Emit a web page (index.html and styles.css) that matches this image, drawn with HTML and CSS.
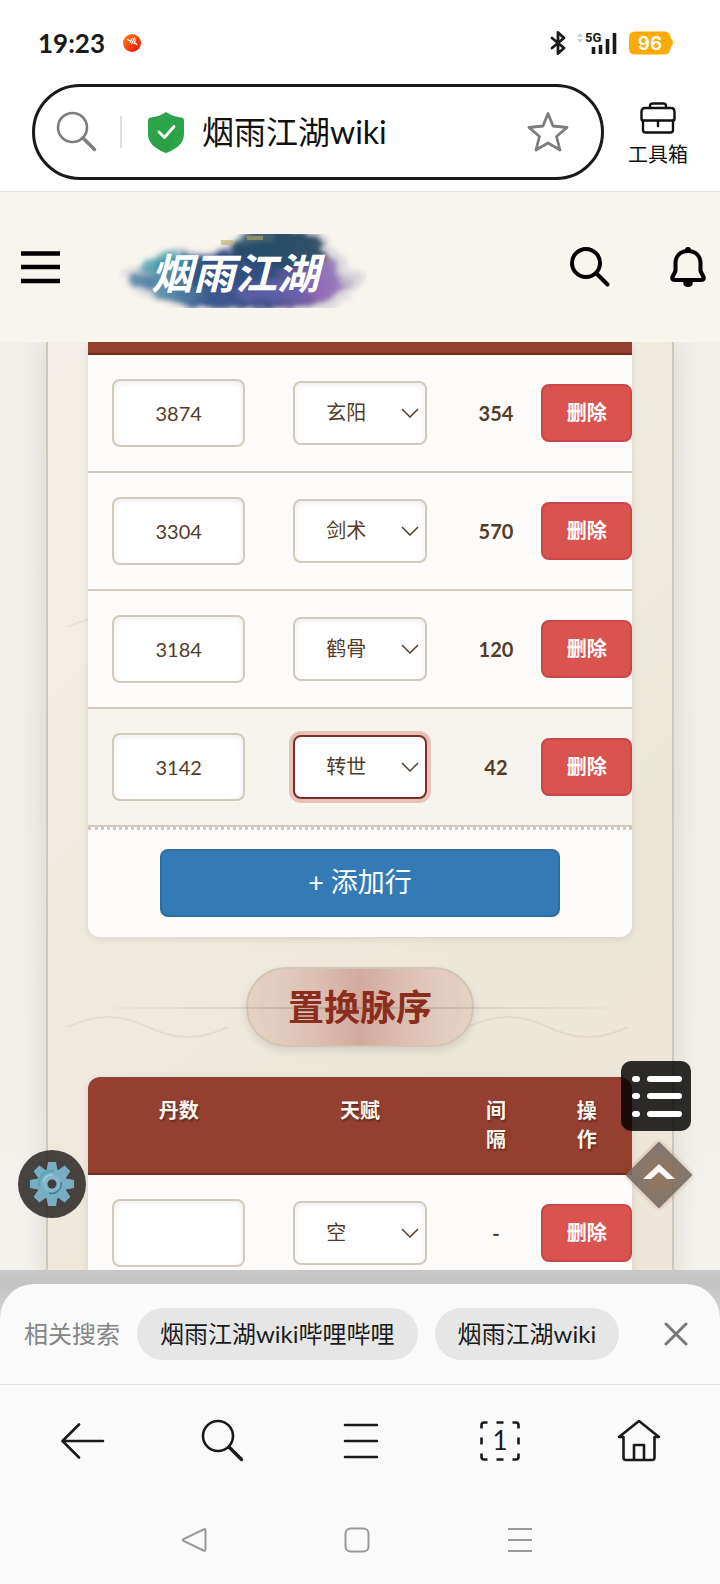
FILE: index.html
```html
<!DOCTYPE html>
<html lang="zh-CN">
<head>
	<meta charset="UTF-8">
	<meta name="viewport" content="width=device-width, initial-scale=1.0">
	<title>烟雨江湖wiki</title>
	<link rel="stylesheet" href="styles.css">
</head>
<body>
	<!-- Status bar -->
	<div class="status-bar">
		<span class="clock">19:23</span>
		<svg class="app-dot" width="18" height="18" viewBox="0 0 18 18">
			<defs>
				<linearGradient id="dot" x1="0" y1="0" x2="1" y2="1">
					<stop offset="0" stop-color="#ff8a1c"/>
					<stop offset=".55" stop-color="#fb3d0a"/>
					<stop offset="1" stop-color="#e01208"/>
				</linearGradient>
			</defs>
			<circle cx="9" cy="9" r="9" fill="url(#dot)"/>
			<path d="M4.500 5.500l2 1M7 8.500l2-4M8.500 10l3-6M11 9.500l1.500-3.500M12.500 9.500l1.500 1" stroke="#fff" stroke-width="1.300" stroke-linecap="round" fill="none"/>
		</svg>
		<div class="status-icons">
			<svg width="16" height="26" viewBox="0 0 16 26" fill="none" stroke="#1a1a1a" stroke-width="2.800" stroke-linejoin="round" stroke-linecap="round">
				<path d="M2 8l12 10-6 5.500v-21L14 8 2 18"/>
			</svg>
			<svg width="42" height="26" viewBox="0 0 42 26">
				<path d="M1 7l3-4 3 4zM1 9l3 4 3-4z" fill="#ccc"/>
				<text class="net-label" x="9" y="12">5G</text>
				<path d="M17.500 17v7M24.500 15v9M31.500 9v15M38.500 3v21" stroke="#1a1a1a" stroke-width="3.600"/>
			</svg>
			<svg width="45" height="24" viewBox="0 0 45 24">
				<path d="M7 .500h30q5 0 6 7 2 1 2 4t-2 4q-1 8-6 8H7q-6 0-6-6v-11q0-6 6-6z" fill="#fcab05"/>
				<text class="battery-label" x="22" y="19" text-anchor="middle">96</text>
			</svg>
		</div>
	</div>

	<!-- Address bar -->
	<div class="address-bar">
		<form class="address-box">
			<svg class="addr-search" width="42" height="42" viewBox="0 0 42 42" fill="none" stroke="#7d7d7d" stroke-linecap="round">
				<circle cx="16.500" cy="16.500" r="14.500" stroke-width="2.600"/>
				<path d="M27 27l11.500 11.500" stroke-width="3.400"/>
			</svg>
			<span class="addr-divider"></span>
			<svg class="addr-shield" width="36" height="41" viewBox="0 0 36 41">
				<path d="M18 0c4 3 10 5 15 5.500 2 .2 3 1.200 3 3V22c0 9-7 15-18 19C7 37 0 31 0 22V8.500c0-1.800 1-2.800 3-3C8 5 14 3 18 0z" fill="#2da44a"/>
				<path d="M4 27l9-7 5 5 8-10v18l-8 8C12 39 7 35 4 27z" fill="#24933f" opacity=".25"/>
				<path d="M11 20l5.500 5.500L26 14.500" fill="none" stroke="#fff" stroke-width="2.800" stroke-linecap="round" stroke-linejoin="round"/>
			</svg>
			<input class="addr-input" type="text" aria-label="地址" value="烟雨江湖wiki">
			<button class="icon-btn" type="button" aria-label="收藏">
				<svg width="42" height="40" viewBox="0 0 42 40" fill="none" stroke="#7d7d7d" stroke-width="2.800" stroke-linejoin="round">
					<path d="M21 1.500l5 12.500 14 1.500-10.500 9 3.500 13.500-12-7-12 7 3.500-13.500L2 15.500 16 14z"/>
				</svg>
			</button>
		</form>
		<button class="toolbox" type="button">
			<svg width="36" height="32" viewBox="0 0 36 32" fill="none" stroke="#111" stroke-width="2.400" stroke-linejoin="round" stroke-linecap="round">
				<path d="M10 6V4q0-2.500 2.500-2.500h11Q26 1.500 26 4v2"/>
				<path d="M3 18.500q-1.500 0-1.500-1.500v-7Q1.500 6 5 6h26q3.500 0 3.500 4v7q0 1.500-1.500 1.500z"/>
				<path d="M3 18.500V28q0 2.500 2.500 2.500h25Q33 30.500 33 28v-9.500M18 19v5"/>
			</svg>
			<span>工具箱</span>
		</button>
	</div>

	<!-- Site header -->
	<header class="site-header">
		<button class="icon-btn" type="button" aria-label="菜单">
			<svg width="39" height="34" viewBox="0 0 39 34" stroke="#000" stroke-width="4.600">
				<path d="M0 3.500h39M0 17h39M0 31h39"/>
			</svg>
		</button>
		<a class="site-logo" href="#" aria-label="烟雨江湖">
			<svg width="250" height="74" viewBox="0 0 250 74">
				<defs>
					<filter id="ink" x="-10%" y="-20%" width="120%" height="140%">
						<feTurbulence type="fractalNoise" baseFrequency=".05 .09" numOctaves="4" seed="3" result="n"/>
						<feDisplacementMap in="SourceGraphic" in2="n" scale="18" xChannelSelector="R" yChannelSelector="G"/>
						<feGaussianBlur stdDeviation="2.500"/>
					</filter>
					<linearGradient id="wash" x1="0" x2="1">
						<stop offset="0" stop-color="#8a96b4" stop-opacity=".1"/>
						<stop offset=".14" stop-color="#4a86a4" stop-opacity=".85"/>
						<stop offset=".35" stop-color="#39598c"/>
						<stop offset=".6" stop-color="#45508c"/>
						<stop offset=".8" stop-color="#7d62a4"/>
						<stop offset="1" stop-color="#a99bb8" stop-opacity=".25"/>
					</linearGradient>
				</defs>
				<g filter="url(#ink)">
					<path d="M2 44Q30 22 84 14T160-8Q205-8 216 12T250 42Q238 62 214 76H70Q20 66 2 44z" fill="#b4b4c8" opacity=".4"/>
					<path d="M10 44Q36 26 88 18T160-2Q196-6 208 16T242 43Q228 58 204 70T60 70Q30 60 10 44z" fill="url(#wash)"/>
					<ellipse cx="160" cy="14" rx="48" ry="20" fill="#234e60" opacity=".85"/>
					<ellipse cx="54" cy="30" rx="28" ry="9" fill="#3a9aa6" opacity=".7"/>
					<ellipse cx="26" cy="46" rx="16" ry="7" fill="#3f78a0" opacity=".7"/>
					<ellipse cx="112" cy="36" rx="50" ry="14" fill="#2c4f7e" opacity=".7"/>
					<ellipse cx="206" cy="48" rx="18" ry="16" fill="#9068bc" opacity=".7"/>
					<ellipse cx="156" cy="58" rx="36" ry="9" fill="#6a66b4" opacity=".6"/>
				</g>
				<path d="M104 6h12v5h-12zM130 2h16v4h-16z" fill="#b8a860" opacity=".6"/>
				<text class="logo-text" x="34" y="55">烟雨江湖</text>
			</svg>
		</a>
		<div class="header-actions">
			<button class="icon-btn" type="button" aria-label="搜索">
				<svg width="40" height="40" viewBox="0 0 40 40" fill="none" stroke="#000" stroke-linecap="round">
					<circle cx="16" cy="16" r="14" stroke-width="4"/>
					<path d="M27 27l10.500 10.500" stroke-width="4"/>
				</svg>
			</button>
			<button class="icon-btn" type="button" aria-label="通知">
				<svg width="36" height="40" viewBox="0 0 36 40">
					<path d="M18 4C10.500 4 5.500 9 5.500 16.500V24L2.500 30q-1 3 2 3h27q3 0 2-3l-3-6v-7.500C30.500 9 25.500 4 18 4z" fill="none" stroke="#000" stroke-width="4" stroke-linejoin="round"/>
					<circle cx="18" cy="3" r="3"/>
					<path d="M13 34h10q0 6-5 6t-5-6z"/>
				</svg>
			</button>
		</div>
	</header>

	<!-- Page content -->
	<main class="viewport">
		<div class="paper">
			<div class="card card-top">
				<table class="calc-table">
					<thead class="head-edge">
						<tr>
							<th class="col-wide" aria-label="丹数"></th>
							<th class="col-wide" aria-label="天赋"></th>
							<th aria-label="间隔"></th>
							<th aria-label="操作"></th>
						</tr>
					</thead>
					<tbody>
						<tr>
							<td><input class="num" type="text" aria-label="丹数" value="3874"></td>
							<td>
								<div class="select-wrap">
									<select aria-label="天赋"><option>玄阳</option></select>
									<svg width="18" height="10" viewBox="0 0 18 10"><path d="M1 1l8 8 8-8"/></svg>
								</div>
							</td>
							<td class="diff">354</td>
							<td class="action"><button class="btn-del" type="button">删除</button></td>
						</tr>
						<tr>
							<td><input class="num" type="text" aria-label="丹数" value="3304"></td>
							<td>
								<div class="select-wrap">
									<select aria-label="天赋"><option>剑术</option></select>
									<svg width="18" height="10" viewBox="0 0 18 10"><path d="M1 1l8 8 8-8"/></svg>
								</div>
							</td>
							<td class="diff">570</td>
							<td class="action"><button class="btn-del" type="button">删除</button></td>
						</tr>
						<tr>
							<td><input class="num" type="text" aria-label="丹数" value="3184"></td>
							<td>
								<div class="select-wrap">
									<select aria-label="天赋"><option>鹤骨</option></select>
									<svg width="18" height="10" viewBox="0 0 18 10"><path d="M1 1l8 8 8-8"/></svg>
								</div>
							</td>
							<td class="diff">120</td>
							<td class="action"><button class="btn-del" type="button">删除</button></td>
						</tr>
						<tr class="active">
							<td><input class="num" type="text" aria-label="丹数" value="3142"></td>
							<td>
								<div class="select-wrap">
									<select aria-label="天赋"><option>转世</option></select>
									<svg width="18" height="10" viewBox="0 0 18 10"><path d="M1 1l8 8 8-8"/></svg>
								</div>
							</td>
							<td class="diff">42</td>
							<td class="action"><button class="btn-del" type="button">删除</button></td>
						</tr>
					</tbody>
				</table>
				<div class="add-row">
					<button class="btn-add" type="button">+ 添加行</button>
				</div>
			</div>

			<div class="section-title">
				<h2>置换脉序</h2>
			</div>

			<div class="card">
				<table class="calc-table">
					<thead>
						<tr>
							<th class="col-wide">丹数</th>
							<th class="col-wide">天赋</th>
							<th>间<br>隔</th>
							<th>操<br>作</th>
						</tr>
					</thead>
					<tbody>
						<tr>
							<td><input class="num" type="text" aria-label="丹数" value=""></td>
							<td>
								<div class="select-wrap">
									<select aria-label="天赋"><option>空</option></select>
									<svg width="18" height="10" viewBox="0 0 18 10"><path d="M1 1l8 8 8-8"/></svg>
								</div>
							</td>
							<td class="diff">-</td>
							<td class="action"><button class="btn-del" type="button">删除</button></td>
						</tr>
					</tbody>
				</table>
			</div>
		</div>

		<!-- Floating buttons -->
		<button class="fab fab-settings" type="button" aria-label="设置">
			<svg width="46" height="46" viewBox="-23 -23 46 46">
				<g fill="#78adc4">
					<path id="tooth" d="M-4-22h8l2 11H-6z"/>
					<use href="#tooth" transform="rotate(45)"/>
					<use href="#tooth" transform="rotate(90)"/>
					<use href="#tooth" transform="rotate(135)"/>
					<use href="#tooth" transform="rotate(180)"/>
					<use href="#tooth" transform="rotate(225)"/>
					<use href="#tooth" transform="rotate(270)"/>
					<use href="#tooth" transform="rotate(315)"/>
					<circle r="15"/>
				</g>
				<path d="M-13 2A13 13 0 0 1 2-13" fill="none" stroke="#58a5b9" stroke-width="2.500"/>
				<circle r="7" fill="none" stroke="#86b6ca" stroke-width="4"/>
				<path d="M-9-2A9.500 9.500 0 0 1 1-9.500" fill="none" stroke="#a4ccda" stroke-width="1.600"/>
				<path d="M9-2A9.500 9.500 0 0 1-3 9" fill="none" stroke="#3d7f97" stroke-width="1.600"/>
				<circle r="4.500" fill="#403f3c"/>
			</svg>
		</button>
		<button class="fab fab-toc" type="button" aria-label="目录">
			<svg width="52" height="44" viewBox="0 0 52 44" stroke="#fff" stroke-width="6" stroke-linecap="round">
				<path d="M5 5h2M5 22h2M5 40h2M20 5h29M20 22h29M20 40h29"/>
			</svg>
		</button>
		<button class="fab fab-top" type="button" aria-label="返回顶部">
			<svg width="68" height="68" viewBox="0 0 68 68">
				<defs>
					<radialGradient id="gem">
						<stop offset="0" stop-color="#8f6a50"/>
						<stop offset="1" stop-color="#6e6c68"/>
					</radialGradient>
				</defs>
				<path d="M34 1l33 33-33 33L1 34z" fill="url(#gem)" stroke="#8c7468" stroke-width="1"/>
				<path d="M18 38l16-15 16 15h-8l-8-7-8 7z" fill="#fff"/>
			</svg>
		</button>
	</main>

	<!-- Browser bottom area -->
	<footer class="bottom">
		<div class="sheet">
			<div class="related">
				<span class="related-label">相关搜索</span>
				<a class="chip" href="#">烟雨江湖wiki哔哩哔哩</a>
				<a class="chip" href="#">烟雨江湖wiki</a>
				<button class="icon-btn related-close" type="button" aria-label="关闭">
					<svg width="24" height="24" viewBox="0 0 24 24" stroke="#777" stroke-width="3" stroke-linecap="round"><path d="M2 2l20 20M22 2L2 22"/></svg>
				</button>
			</div>
			<nav class="toolbar">
				<button class="icon-btn" type="button" aria-label="后退">
					<svg width="44" height="44" viewBox="0 0 44 44"><path d="M42 22H2M18 5.500L1.500 22 18 38.500"/></svg>
				</button>
				<button class="icon-btn" type="button" aria-label="搜索">
					<svg width="44" height="44" viewBox="0 0 44 44"><circle cx="18" cy="17" r="15"/><path d="M29 28l12.500 12.500" stroke-width="3.400"/></svg>
				</button>
				<button class="icon-btn" type="button" aria-label="菜单">
					<svg width="36" height="44" viewBox="0 0 36 44"><path d="M2 6h32M2 22h32M2 38h32"/></svg>
				</button>
				<button class="icon-btn tabs-btn" type="button" aria-label="标签页">
					<svg width="44" height="44" viewBox="0 0 44 44">
						<path d="M3.500 9.500V6q0-2.500 2.500-2.500h3.500M18.500 3.500h7M34.500 3.500H38q2.500 0 2.500 2.500v3.500M40.500 18.500v7M40.500 34.500V38q0 2.500-2.500 2.500h-3.500M25.500 40.500h-7M9.500 40.500H6q-2.500 0-2.500-2.500v-3.500M3.500 25.500v-7" stroke-linecap="butt"/>
						<text x="22" y="31" text-anchor="middle">1</text>
					</svg>
				</button>
				<button class="icon-btn" type="button" aria-label="主页">
					<svg width="44" height="44" viewBox="0 0 44 44"><path d="M6.500 18H2L22 2l20 16h-4.500v20.500q0 2.500-2.500 2.500H9q-2.500 0-2.500-2.500zM17 40V26h10v14"/></svg>
				</button>
			</nav>
			<div class="system-nav">
				<svg width="26" height="26" viewBox="0 0 26 26"><path d="M22.500 2.500q2-1 2 1v19q0 2-2 1L2.500 14q-1.500-1 0-2z"/></svg>
				<svg width="26" height="26" viewBox="0 0 26 26"><rect x="1.500" y="1.500" width="23" height="23" rx="5"/></svg>
				<svg width="26" height="26" viewBox="0 0 26 26"><path d="M1 2h24M1 13h24M1 24h24"/></svg>
			</div>
		</div>
	</footer>
</body>
</html>
```
FILE: styles.css
```css
* {
	margin: 0;
	padding: 0;
	box-sizing: border-box;
}

body {
	font-family: Lato, 'Noto Sans CJK SC', sans-serif;
	line-height: 1.4;
	display: flex;
	flex-direction: column;
	height: 100vh;
	background: #fff;
	color: #111;
	overflow: hidden;
}

button,
input,
select {
	font: inherit;
	color: inherit;
	border: none;
	background: none;
	outline: none;
}

svg {
	display: block;
	flex: none;
}

.icon-btn {
	display: flex;
	align-items: center;
	justify-content: center;
	flex: none;
}

/* Status bar */
.status-bar {
	display: flex;
	align-items: center;
	height: 84px;
	padding: 2px 47px 0 38px;
}

.clock {
	font-size: 26px;
	font-weight: 700;
	color: #1a1a1a;
}

.app-dot {
	margin-left: 18px;
}

.status-icons {
	display: flex;
	align-items: center;
	gap: 10px;
	margin-left: auto;
}

.net-label {
	font-family: Roboto, sans-serif;
	font-size: 13px;
	font-weight: 700;
	fill: #1a1a1a;
}

.battery-label {
	font-family: Inter, sans-serif;
	font-size: 19px;
	font-weight: 600;
	fill: #fff;
}

/* Address bar */
.address-bar {
	display: flex;
	align-items: center;
	gap: 24px;
	padding: 0 32px 11px;
	border-bottom: 1px solid #e0e0e0;
}

.address-box {
	display: flex;
	align-items: center;
	flex: 1;
	min-width: 0;
	height: 96px;
	padding: 0 32px 0 21px;
	border: 3px solid #1a1a1a;
	border-radius: 48px;
}

.addr-divider {
	width: 2px;
	height: 32px;
	margin: 0 26px 0 22px;
	background: #ddd;
}

.addr-input {
	flex: 1;
	min-width: 0;
	margin-left: 18px;
	font-size: 32px;
}

.toolbox {
	display: flex;
	flex-direction: column;
	align-items: center;
	gap: 7px;
	padding-top: 4px;
	font-size: 20px;
	line-height: 26px;
}

/* Site header */
.site-header {
	display: flex;
	align-items: center;
	height: 150px;
	padding: 0 14px 0 21px;
	background: #f8f5ee;
}

.site-logo {
	margin: 8px 0 0 57px;
}

.logo-text {
	font-size: 42px;
	font-weight: 700;
	font-style: italic;
	fill: #fff;
}

.header-actions {
	display: flex;
	gap: 60px;
	margin-left: auto;
}

/* Content */
.viewport {
	position: relative;
	flex: 1;
	min-height: 0;
	overflow: hidden;
	padding: 0 46px;
	background: linear-gradient(#f1efe9, #f0eee7 50%, #f4f2ec);
}

.paper {
	padding: 0 40px 40px;
	border: solid #cec7b9;
	border-width: 0 2px;
	background:
		url("data:image/svg+xml,%3Csvg xmlns='http://www.w3.org/2000/svg' width='600' height='400'%3E%3Cpath d='M20 285Q60 265 100 285T180 285M220 285Q260 265 300 285T380 285M420 285Q460 265 500 285T580 285' fill='none' stroke='%238b7d6b' stroke-opacity='.12' stroke-width='2'/%3E%3C/svg%3E") repeat-y,
		linear-gradient(135deg, #f5f1ea, #f0ebdf 40%, #ece6d8 70%, #eee6da);
	box-shadow: 0 0 24px rgba(60, 60, 60, .14);
}

.card {
	overflow: hidden;
	border-radius: 12px;
	background: #fdfcfa;
	box-shadow: 0 2px 8px rgba(0, 0, 0, .1);
}

/* Card already scrolled under the header */
.card-top {
	border-radius: 0 0 12px 12px;
}

.calc-table {
	width: 100%;
	table-layout: fixed;
	border-collapse: separate;
	border-spacing: 0;
	color: #523c29;
}

.calc-table th {
	padding: 19px 24px;
	border-bottom: 2px solid #722a1d;
	background: #943f2f;
	color: #fdf6ee;
	font-size: 20px;
	font-weight: 700;
	line-height: 29px;
	text-shadow: 1px 2px 2px rgba(0, 0, 0, .35);
	vertical-align: top;
}

.calc-table th.col-wide {
	width: 33.33%;
}

.calc-table .head-edge th {
	height: 13px;
	padding: 0;
}

.calc-table td {
	height: 118px;
	padding: 0 24px;
	border-bottom: 2px solid #d1cabd;
	font-size: 20px;
	text-align: center;
	vertical-align: middle;
}

.calc-table .active td {
	background: #f6f4ed;
}

.calc-table .diff {
	padding: 0;
	font-weight: 700;
}

.calc-table .action {
	padding: 0;
}

.num,
.select-wrap select {
	display: block;
	width: 100%;
	border: 2px solid #d1cabd;
	border-radius: 8px;
	background: #fff;
	box-shadow: inset 0 2px 6px rgba(0, 0, 0, .08);
	font-size: 20px;
}

.num {
	height: 68px;
	text-align: center;
}

.select-wrap {
	display: grid;
	align-items: center;
}

.select-wrap select,
.select-wrap svg {
	grid-area: 1 / 1;
}

.select-wrap select {
	height: 64px;
	padding: 0 54px 2px 31px;
	appearance: none;
}

.select-wrap svg {
	justify-self: end;
	margin-right: 8px;
	fill: none;
	stroke: #523c29;
	stroke-width: 1.500;
	pointer-events: none;
}

.calc-table .active select {
	border-color: #7d2f27;
	box-shadow: 0 0 0 4px rgba(200, 90, 80, .32);
}

.btn-del {
	display: block;
	width: 100%;
	height: 58px;
	padding-bottom: 2px;
	border: 2px solid #c9474a;
	border-radius: 8px;
	background: #d9534f;
	color: #fff;
	font-size: 20px;
	font-weight: 700;
}

.add-row {
	padding: 19px 72px 20px;
	border-top: 3px dotted #d1cabd;
}

.btn-add {
	display: block;
	width: 100%;
	height: 68px;
	padding-bottom: 2px;
	border: 2px solid #2e6da4;
	border-radius: 8px;
	background: #337ab7;
	color: #fff;
	font-size: 27px;
}

/* Section title */
.section-title {
	position: relative;
	display: flex;
	justify-content: center;
	padding: 30px 0;
}

.section-title::after {
	content: '';
	position: absolute;
	top: 50%;
	left: 0;
	right: 0;
	height: 2px;
	background: linear-gradient(90deg, transparent, rgba(120, 100, 80, .3) 50%, transparent);
}

.section-title h2 {
	padding: 0 40px;
	border: 2px solid #d3c5b6;
	border-radius: 40px;
	background: linear-gradient(90deg, #e5d4c5, #dcc0b2 30%, #d2aa9d 50%, #dcc0b2 70%, #e5d4c5);
	box-shadow: 0 4px 8px rgba(0, 0, 0, .1);
	color: #8b2d1c;
	font-size: 36px;
	font-weight: 700;
	line-height: 76px;
}

/* Floating buttons */
.fab {
	position: absolute;
	display: flex;
	align-items: center;
	justify-content: center;
}

.fab-settings {
	left: 18px;
	bottom: 52px;
	width: 68px;
	height: 68px;
	border-radius: 50%;
	background: rgba(40, 38, 35, .85);
}

.fab-toc {
	right: 29px;
	bottom: 139px;
	width: 70px;
	height: 70px;
	border-radius: 10px;
	background: rgba(0, 0, 0, .82);
}

.fab-top {
	right: 27px;
	bottom: 61px;
	opacity: .9;
	filter: drop-shadow(0 0 2px rgba(120, 60, 30, .5));
}

/* Bottom area */
.bottom {
	padding-top: 14px;
	background: linear-gradient(#c8c8c8, #c4c4c4 14px, #d4d4d4 50px);
}

.sheet {
	border-radius: 34px 34px 0 0;
	background: #fafafa;
}

.related {
	display: flex;
	align-items: center;
	gap: 17px;
	height: 101px;
	padding: 0 32px 0 24px;
	border-bottom: 1px solid #e2e2e2;
	font-size: 24px;
	white-space: nowrap;
}

.related-label {
	color: #858585;
}

.chip {
	padding: 0 23px;
	border-radius: 26px;
	background: #e6e6e6;
	color: #1a1a1a;
	line-height: 52px;
	text-decoration: none;
}

.related-close {
	margin-left: auto;
}

.toolbar {
	display: flex;
	height: 110px;
	padding: 2px 11px 0 13px;
}

.toolbar button {
	flex: 1;
}

.toolbar svg {
	fill: none;
	stroke: #1a1a1a;
	stroke-width: 2.600;
	stroke-linecap: round;
	stroke-linejoin: round;
}

.tabs-btn text {
	fill: #1a1a1a;
	stroke: none;
	font-size: 26px;
}

.system-nav {
	display: flex;
	justify-content: center;
	gap: 137px;
	height: 89px;
	padding: 32px 6px 0 0;
}

.system-nav svg {
	fill: none;
	stroke: #999;
	stroke-width: 2;
}
```
